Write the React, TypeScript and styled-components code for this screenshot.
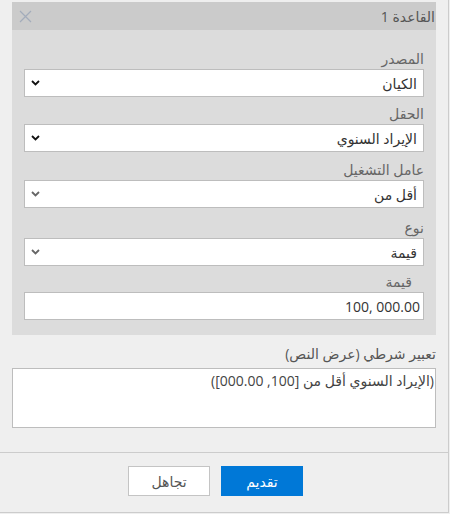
import React from "react";
import styled, { createGlobalStyle } from "styled-components";

const GlobalStyle = createGlobalStyle`
  body {
    margin: 0;
    background: #efefef;
    font-family: "Open Sans", "DejaVu Sans", sans-serif;
  }
`;

const Dialog = styled.div`
  direction: rtl;
  box-sizing: border-box;
  width: 449px;
  height: 513px;
  display: flex;
  flex-direction: column;
  background: #efefef;
  border-right: 1px solid #cccccc;
  border-bottom: 1px solid #cccccc;
`;

const Content = styled.div`
  flex: 1;
  padding: 2px 12px 0 12px;
`;

const RulePanel = styled.section`
  background: #dcdcdc;
`;

const PanelHeader = styled.div`
  height: 28px;
  display: flex;
  align-items: center;
  justify-content: space-between;
  background: #cbcbcb;
  padding-right: 1px;
  padding-left: 7px;
`;

const PanelTitle = styled.span`
  font-size: 14px;
  color: #555;
`;

const CloseButton = styled.button`
  border: none;
  background: transparent;
  padding: 0;
  width: 13px;
  height: 13px;
  display: flex;
  cursor: pointer;
`;

const PanelBody = styled.div`
  padding: 19px 12px 15px 12px;
`;

const Field = styled.div<{ $gap: number }>`
  margin-top: ${(p) => p.$gap}px;
`;

const Label = styled.label<{ $indent?: number }>`
  display: block;
  height: 20px;
  line-height: 20px;
  font-size: 14px;
  color: #666;
  padding-right: ${(p) => p.$indent ?? 0}px;
`;

const SelectBox = styled.div`
  box-sizing: border-box;
  height: 28px;
  display: flex;
  align-items: center;
  background: #fff;
  border: 1px solid #bdbdbd;
  padding: 0 6px 0 6px;
`;

const SelectValue = styled.span`
  font-size: 14px;
  color: #333;
`;

const Chevron = styled.svg`
  margin-right: auto;
`;

const TextInput = styled.div`
  box-sizing: border-box;
  height: 28px;
  display: flex;
  align-items: center;
  background: #fff;
  border: 1px solid #bdbdbd;
  padding: 0 3px;
  font-size: 14px;
  color: #333;
  direction: ltr;
  justify-content: flex-end;
`;

const ExpressionLabel = styled.div`
  margin-top: 9px;
  height: 20px;
  line-height: 20px;
  font-size: 14px;
  color: #555;
`;

const ExpressionBox = styled.div`
  box-sizing: border-box;
  margin-top: 4px;
  height: 60px;
  background: #fff;
  border: 1px solid #bdbdbd;
  padding: 2px 1px;
  font-size: 14px;
  line-height: 20px;
  color: #444;
`;

const Footer = styled.footer`
  height: 60px;
  box-sizing: border-box;
  border-top: 1px solid #cccccc;
  display: flex;
  align-items: flex-start;
  gap: 11px;
  padding: 13px 145px 0 0;
`;

const Button = styled.button<{ $primary?: boolean }>`
  box-sizing: border-box;
  width: 82px;
  height: 30px;
  font-family: inherit;
  font-size: 14px;
  cursor: pointer;
  border: 1px solid ${(p) => (p.$primary ? "#0078d7" : "#c4c4c4")};
  background: ${(p) => (p.$primary ? "#0078d7" : "#ffffff")};
  color: ${(p) => (p.$primary ? "#ffffff" : "#555")};
`;

function Select({ value, dark }: { value: string; dark?: boolean }) {
  return (
    <SelectBox>
      <SelectValue>{value}</SelectValue>
      <Chevron width="9" height="6" viewBox="0 0 9 6">
        <polyline
          points="1,1 4.5,4.5 8,1"
          fill="none"
          stroke={dark ? "#111" : "#666"}
          strokeWidth="1.8"
        />
      </Chevron>
    </SelectBox>
  );
}

export default function App() {
  return (
    <>
      <GlobalStyle />
      <Dialog>
        <Content>
          <RulePanel>
            <PanelHeader>
              <PanelTitle>القاعدة 1</PanelTitle>
              <CloseButton aria-label="إغلاق">
                <svg width="13" height="13" viewBox="0 0 13 13">
                  <path d="M1 1L12 12M12 1L1 12" stroke="#a3acbb" strokeWidth="1.2" />
                </svg>
              </CloseButton>
            </PanelHeader>
            <PanelBody>
              <Field $gap={0}>
                <Label>المصدر</Label>
                <Select value="الكيان" dark />
              </Field>
              <Field $gap={7}>
                <Label>الحقل</Label>
                <Select value="الإيراد السنوي" dark />
              </Field>
              <Field $gap={8}>
                <Label>عامل التشغيل</Label>
                <Select value="أقل من" />
              </Field>
              <Field $gap={10}>
                <Label>نوع</Label>
                <Select value="قيمة" />
              </Field>
              <Field $gap={6}>
                <Label $indent={12}>قيمة</Label>
                <TextInput>100, 000.00</TextInput>
              </Field>
            </PanelBody>
          </RulePanel>
          <ExpressionLabel>تعبير شرطي (عرض النص)</ExpressionLabel>
          <ExpressionBox>(الإيراد السنوي أقل من [100, 000.00])</ExpressionBox>
        </Content>
        <Footer>
          <Button $primary>تقديم</Button>
          <Button>تجاهل</Button>
        </Footer>
      </Dialog>
    </>
  );
}
